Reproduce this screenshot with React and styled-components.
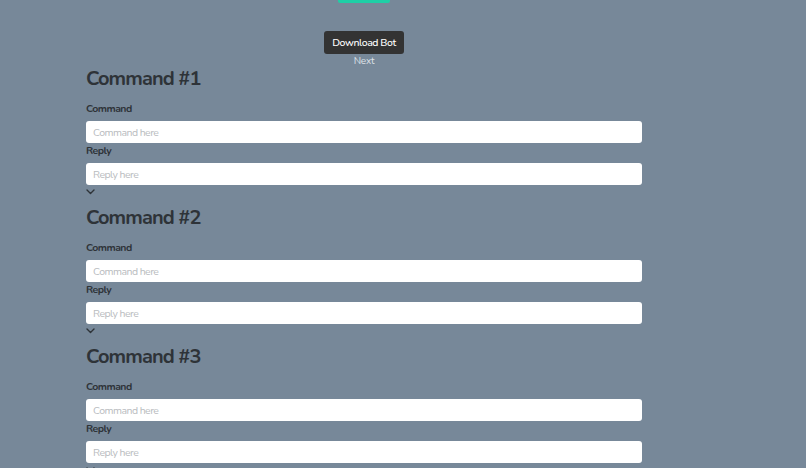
import React from 'react';
import styled, { createGlobalStyle } from 'styled-components';

const GlobalStyle = createGlobalStyle`
  html, body {
    margin: 0;
    background-color: #778899;
    font-family: "Nunito", Lato, "Noto Sans", sans-serif;
  }
`;

const Page = styled.div`
  width: 556px;
  padding: 0 86px;
  display: flex;
  flex-direction: column;
`;

const Top = styled.div`
  display: flex;
  flex-direction: column;
  align-items: center;
`;

const TealBar = styled.div`
  width: 52px;
  height: 3px;
  background-color: #1fcfa6;
  border-radius: 0 0 2px 2px;
`;

const DownloadButton = styled.button`
  margin-top: 28px;
  width: 80px;
  height: 23px;
  border: none;
  border-radius: 3px;
  background-color: #333333;
  color: #ffffff;
  font-family: inherit;
  font-size: 10.5px;
  font-weight: 500;
  letter-spacing: -0.04em;
  padding: 0;
  cursor: pointer;
`;

const NextLink = styled.span`
  margin-top: 1px;
  height: 12px;
  line-height: 12px;
  font-size: 10px;
  letter-spacing: -0.02em;
  color: #dde2e8;
`;

const Section = styled.section`
  display: flex;
  flex-direction: column;
  margin-bottom: 10px;
`;

const Heading = styled.h2`
  margin: 0 0 11px;
  height: 24px;
  line-height: 24px;
  font-size: 20px;
  font-weight: 700;
  letter-spacing: -0.045em;
  color: #2e3338;
`;

const Label = styled.label`
  height: 14px;
  line-height: 14px;
  font-size: 10.5px;
  font-weight: 700;
  letter-spacing: -0.05em;
  color: #2e3338;
  margin-bottom: ${p => p.$gap}px;
`;

const Input = styled.input`
  box-sizing: border-box;
  width: 100%;
  height: 22px;
  border: none;
  border-radius: 3px;
  background-color: #ffffff;
  padding: 0 7px;
  font-family: inherit;
  font-size: 10.5px;
  letter-spacing: -0.05em;
  color: #333;
  margin-bottom: 1px;
  outline: none;

  &::placeholder {
    color: #b9bcc0;
  }
`;

const Toggle = styled.div`
  box-sizing: border-box;
  height: 10px;
  padding-top: 3px;
  display: flex;
  align-items: flex-start;
`;

const Chevron = () => (
  <svg width="9" height="6" viewBox="0 0 9 6">
    <path d="M1 1 L4.5 4.5 L8 1" fill="none" stroke="#2e3338" strokeWidth="1.4" strokeLinecap="round" strokeLinejoin="round" />
  </svg>
);

const CommandBlock = ({ n }) => (
  <Section>
    <Heading>Command #{n}</Heading>
    <Label $gap={5}>Command</Label>
    <Input placeholder="Command here" />
    <Label $gap={5}>Reply</Label>
    <Input placeholder="Reply here" />
    <Toggle><Chevron /></Toggle>
  </Section>
);

export default function App() {
  return (
    <>
      <GlobalStyle />
      <Page>
        <Top>
          <TealBar />
          <DownloadButton>Download Bot</DownloadButton>
          <NextLink>Next</NextLink>
        </Top>
        {[1, 2, 3].map(n => <CommandBlock key={n} n={n} />)}
      </Page>
    </>
  );
}
